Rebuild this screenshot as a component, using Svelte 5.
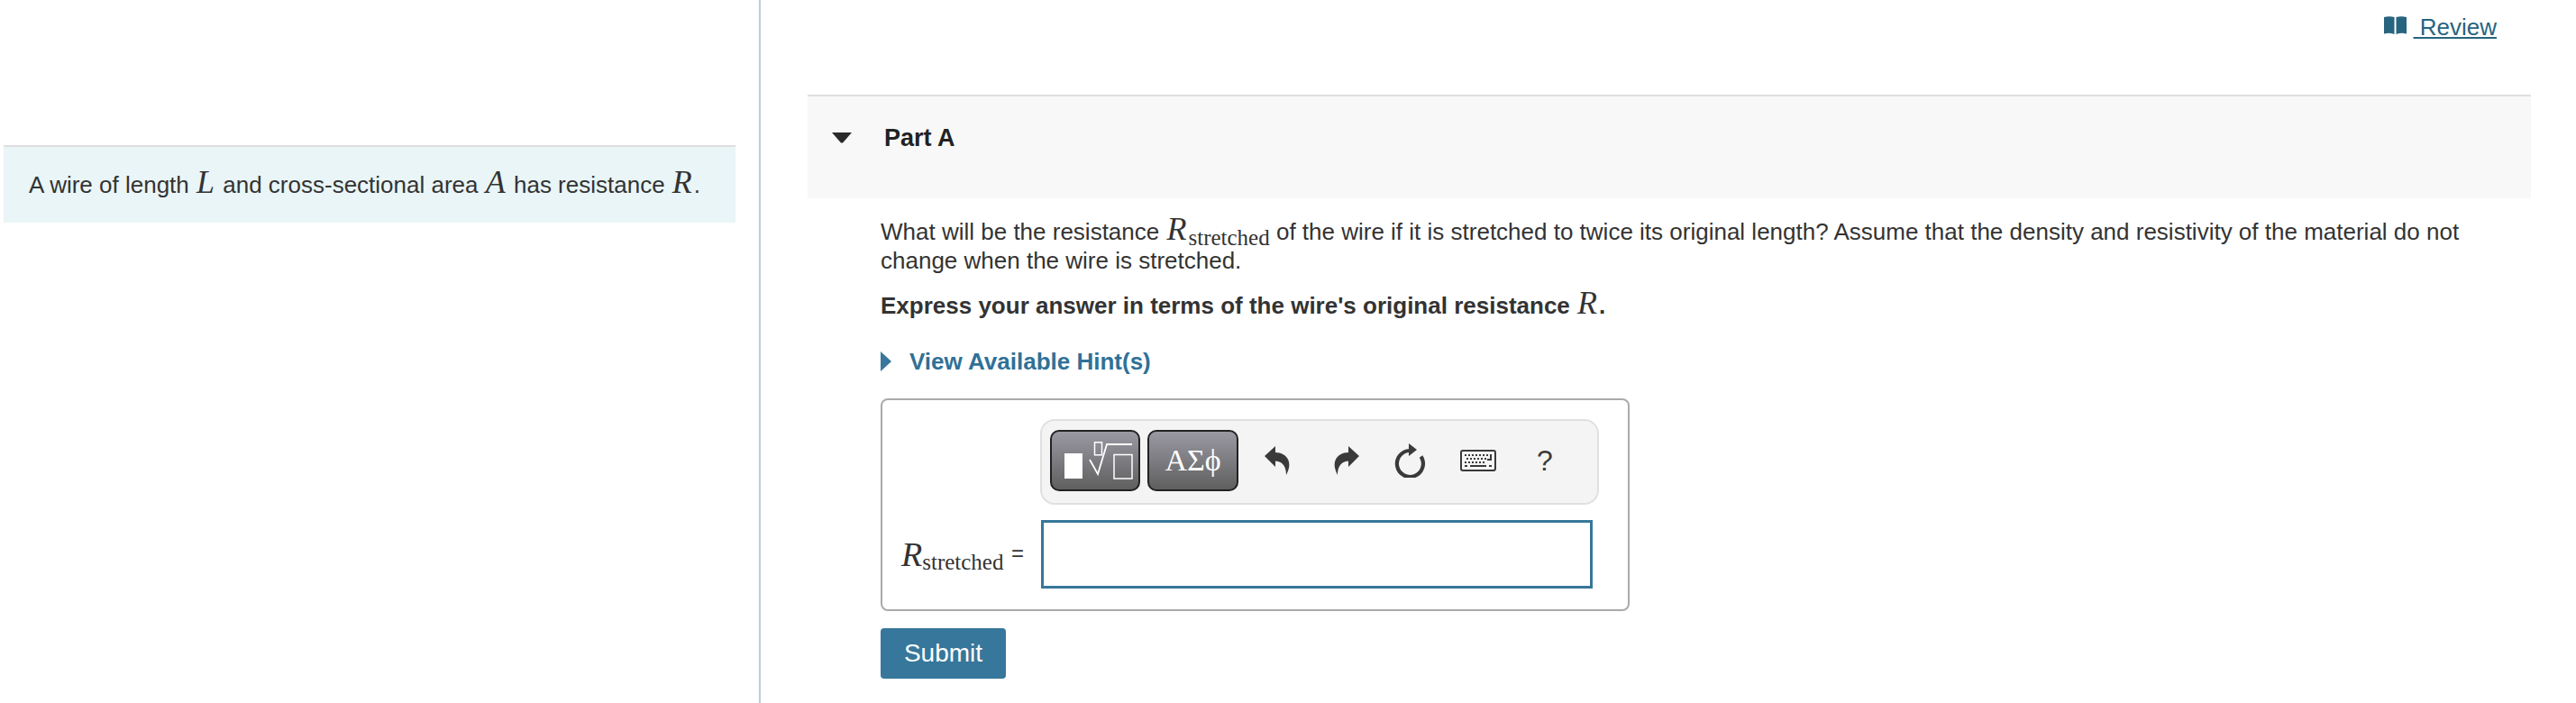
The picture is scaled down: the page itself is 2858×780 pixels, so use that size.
<script>
	let answer = $state('');
</script>

<div class="page">
	<aside class="intro-pane">
		<div class="intro">
			A wire of length <i class="m big">L</i> and cross-sectional area <i class="m big">A</i> has resistance <i class="m big">R</i>.
		</div>
	</aside>

	<main class="work-pane">
		<div class="review-row">
			<a class="review" href="#review">
				<svg class="book" viewBox="0 0 25 20" width="25" height="20" aria-hidden="true">
					<path d="M0 1 Q6 -0.5 11.5 1 V20 Q6 18 0 19.5 Z" />
					<path d="M13.5 1 Q19 -0.5 25 1 V19.5 Q19 18 13.5 20 Z" />
				</svg>
				<span class="review-text">&nbsp;Review</span>
			</a>
		</div>

		<section class="part">
			<header class="part-head">
				<svg class="caret-down" viewBox="0 0 22 12" width="22" height="12" aria-hidden="true">
					<path d="M0 0 H22 L12 11.5 H10 Z" />
				</svg>
				<h2>Part A</h2>
			</header>

			<div class="part-body">
				<p class="question">
					What will be the resistance <span class="rs"><i class="m big">R</i><span class="sub">stretched</span></span> of the wire if it is stretched to twice its original length? Assume that the density and resistivity of the material do not change when the wire is stretched.
				</p>
				<p class="instruct">Express your answer in terms of the wire's original resistance <i class="m big reg">R</i>.</p>

				<div class="hint">
					<span class="caret-right"></span>
					<span>View Available Hint(s)</span>
				</div>

				<div class="answer-box">
					<div class="toolbar">
						<button class="tool-btn templ" aria-label="Templates">
							<svg viewBox="0 0 78 42" width="78" height="42" fill="none" stroke="#fff" stroke-width="1.5">
								<rect x="0" y="13" width="20" height="28" fill="#fff" stroke="none" />
								<rect x="33.5" y="0.8" width="8" height="14" />
								<path d="M28 20 L37 36 L47 3 H75" stroke-width="1.8" />
								<rect x="55" y="14.5" width="20" height="26.5" />
							</svg>
						</button>
						<button class="tool-btn greek">ΑΣϕ</button>
						<div class="icons">
							<svg class="undo" viewBox="0 0 28 32" width="28" height="32">
								<path d="M0 11 L12 0 V7 C22 7 29 14 27 24 C26 28 25 30 24 32 C24 24 21 17 12 16.5 V23 Z" />
							</svg>
							<svg class="redo" viewBox="0 0 28 32" width="28" height="32">
								<path d="M28 11 L16 0 V7 C6 7 -1 14 1 24 C2 28 3 30 4 32 C4 24 7 17 16 16.5 V23 Z" />
							</svg>
							<svg class="reset" viewBox="0 0 34 38" width="34" height="38">
								<path d="M17 8 A14.5 14.5 0 1 0 29.5 14.5" fill="none" stroke="#3a3a3a" stroke-width="4.2" />
								<path d="M16 0 L25 7 L16 14 Z" />
							</svg>
							<svg class="kbd" viewBox="0 0 40 24" width="40" height="24">
								<rect x="1" y="1" width="38" height="22" rx="2" fill="none" stroke="#3a3a3a" stroke-width="2" />
								<path d="M5 5h2v2H5zM9 5h2v2H9zM13 5h2v2h-2zM17 5h2v2h-2zM21 5h2v2h-2zM25 5h2v2h-2zM29 5h2v2h-2zM33 5h2v7h-5v-2h3zM7 9h2v2H7zM11 9h2v2h-2zM15 9h2v2h-2zM19 9h2v2h-2zM23 9h2v2h-2zM27 9h2v2h-2zM5 13h2v2H5zM9 13h2v2H9zM13 13h2v2h-2zM17 13h2v2h-2zM21 13h2v2h-2zM25 13h2v2h-2zM5 17h3v2H5zM11 17h18v2H11zM32 17h3v2h-3z" />
							</svg>
							<span class="help">?</span>
						</div>
					</div>

					<div class="answer-row">
						<label class="answer-label" for="answer">
							<span class="rs"><i class="m label-r">R</i><span class="sub label-sub">stretched</span></span>
							<span class="eq">=</span>
						</label>
						<input id="answer" class="answer-input" bind:value={answer} />
					</div>
				</div>

				<button class="submit">Submit</button>
			</div>
		</section>
	</main>
</div>

<style>
	:global(body) {
		margin: 0;
		background: #fff;
	}

	.page {
		display: grid;
		grid-template-columns: 842px 1fr;
		height: 780px;
		overflow: hidden;
		font-family: "Liberation Sans", Arial, sans-serif;
		font-size: 26px;
		color: #333;
	}

	.intro-pane {
		padding: 161px 26px 0 4px;
	}

	.intro {
		background: #e9f5f7;
		border-top: 2px solid #dedede;
		height: 84px;
		line-height: 84px;
		padding-left: 28px;
		white-space: nowrap;
	}

	.m {
		font-family: "Liberation Serif", "DejaVu Serif", serif;
		font-style: italic;
	}

	.big {
		font-size: 36px;
		line-height: 0;
		margin: 0 2px 0 1px;
	}

	.reg {
		font-weight: 400;
	}

	.work-pane {
		border-left: 2px solid #b9cbdf;
		padding: 0 50px 0 52px;
		min-width: 0;
	}

	.review-row {
		display: flex;
		justify-content: flex-end;
		height: 105px;
		padding: 15px 38px 0 0;
		box-sizing: border-box;
	}

	.review {
		display: flex;
		align-items: flex-start;
		gap: 8px;
		height: 30px;
		color: #27647f;
		font-size: 26px;
		line-height: 30px;
		text-decoration: none;
	}

	.book {
		margin-top: 3px;
		fill: #27647f;
	}

	.review-text {
		text-decoration: underline;
	}

	.part-head {
		display: flex;
		align-items: flex-start;
		background: #f8f8f8;
		border-top: 2px solid #dedede;
		height: 113px;
		padding-left: 27px;
	}

	.caret-down {
		margin-top: 40px;
		fill: #2a2a2a;
	}

	h2 {
		margin: 31px 0 0 36px;
		font-size: 27px;
		line-height: 30px;
		font-weight: 700;
		color: #222;
	}

	.part-body {
		padding: 21px 40px 0 81px;
	}

	p {
		margin: 0;
	}

	.question {
		line-height: 32px;
	}

	.rs {
		white-space: nowrap;
	}

	.sub {
		font-family: "Liberation Serif", "DejaVu Serif", serif;
		font-size: 25px;
		line-height: 0;
		vertical-align: -6px;
	}

	.label-sub {
		vertical-align: -4px;
	}

	.instruct {
		margin-top: 18px;
		line-height: 32px;
		font-weight: 700;
	}

	.hint {
		display: flex;
		align-items: center;
		gap: 20px;
		margin-top: 30px;
		font-weight: 700;
		color: #2f7197;
		line-height: 32px;
	}

	.caret-right {
		width: 0;
		height: 0;
		border-top: 11px solid transparent;
		border-bottom: 11px solid transparent;
		border-left: 12px solid #37779b;
	}

	.answer-box {
		box-sizing: content-box;
		width: 652px;
		height: 211px;
		margin-top: 25px;
		border: 2px solid #aaa;
		border-radius: 8px;
		padding: 21px 0 0 175px;
	}

	.toolbar {
		display: flex;
		align-items: center;
		gap: 8px;
		width: 620px;
		height: 95px;
		box-sizing: border-box;
		padding: 0 0 3px 9px;
		background: #f4f4f4;
		border: 2px solid #e0e0e0;
		border-radius: 16px;
	}

	.tool-btn {
		display: flex;
		align-items: center;
		justify-content: center;
		padding: 0;
		height: 68px;
		border: 2px solid #222;
		border-radius: 10px;
		background: linear-gradient(#9a99a3, #5f5f5f);
		color: #fff;
	}

	.templ {
		width: 100px;
	}

	.templ svg {
		margin-left: 10px;
	}

	.greek {
		width: 101px;
		font-family: "Liberation Serif", "DejaVu Serif", serif;
		font-size: 34px;
	}

	.icons {
		flex: 1;
		display: flex;
		align-items: center;
		height: 100%;
		fill: #3a3a3a;
	}

	.undo { margin-left: 21px; }
	.redo { margin-left: 49px; }
	.reset { margin-left: 39px; }
	.kbd { margin-left: 39px; }

	.help {
		margin-left: 45px;
		font-size: 32px;
		color: #3a3a3a;
	}

	.answer-row {
		display: flex;
		align-items: center;
		margin: 17px 0 0 -175px;
	}

	.answer-label {
		display: flex;
		align-items: center;
		justify-content: space-between;
		box-sizing: border-box;
		width: 176px;
		padding: 0 19px 0 21px;
	}

	.label-r {
		font-size: 38px;
		line-height: 1;
	}

	.eq {
		font-size: 24px;
		margin-top: -3px;
	}

	.answer-input {
		display: block;
		width: 612px;
		height: 76px;
		box-sizing: border-box;
		margin: 0;
		border: 3px solid #37779b;
		border-radius: 0;
		outline: none;
		background: #fff;
	}

	.submit {
		display: block;
		margin-top: 19px;
		width: 139px;
		height: 56px;
		padding: 0;
		border: none;
		border-radius: 4px;
		background: #37779b;
		color: #fff;
		font-family: "Liberation Sans", Arial, sans-serif;
		font-size: 28px;
	}
</style>
